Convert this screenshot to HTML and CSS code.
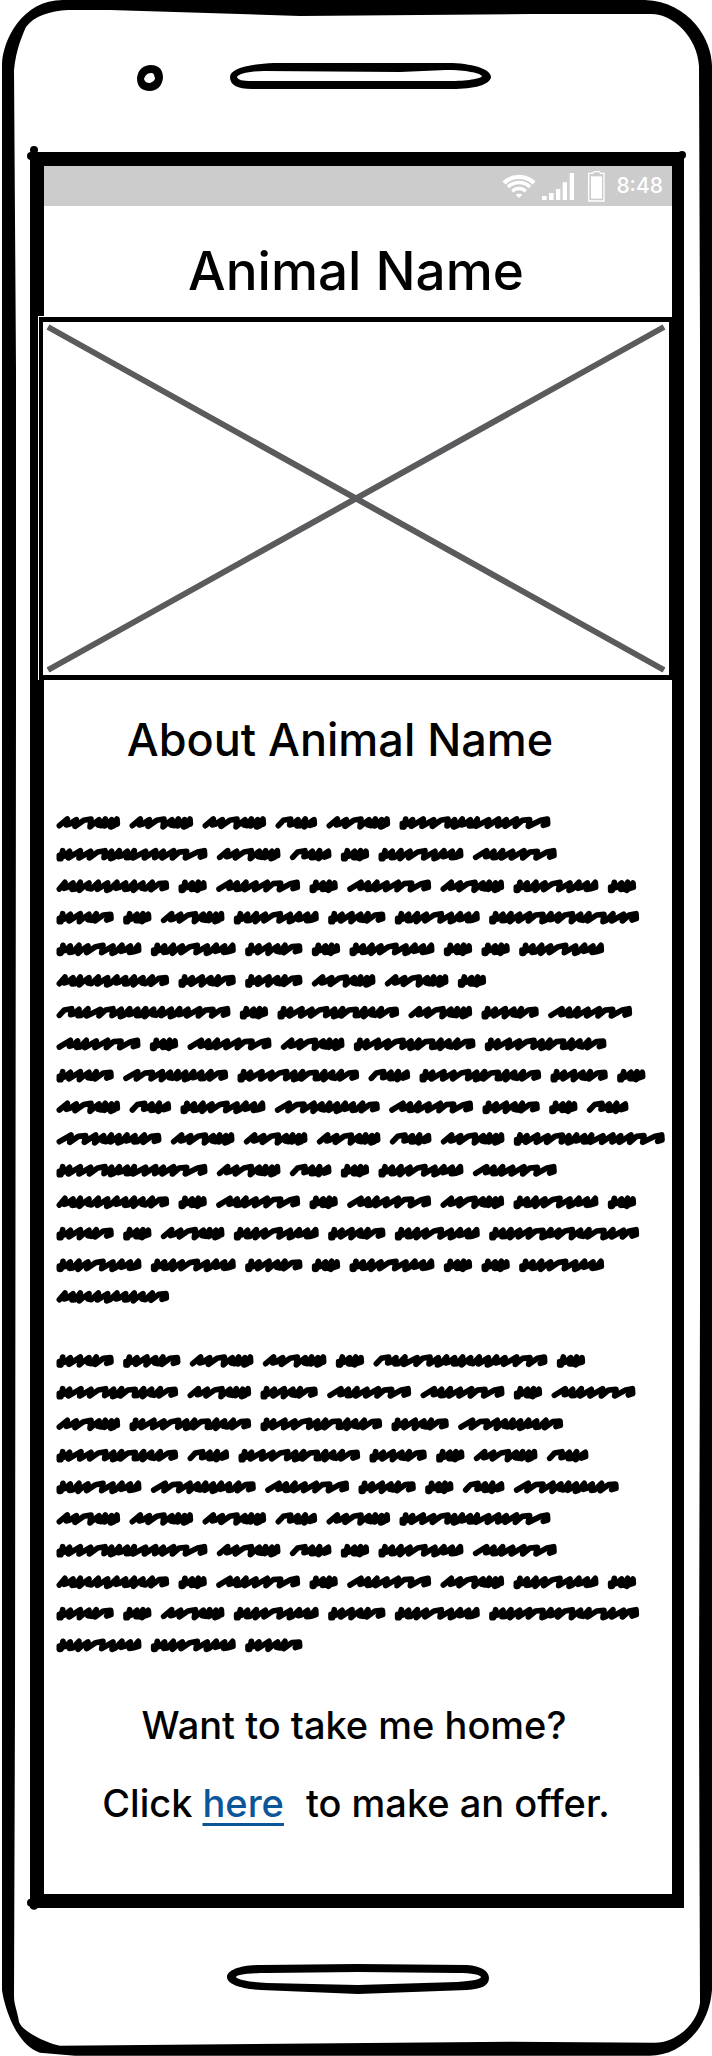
FILE: index.html
```html
<!DOCTYPE html>
<html lang="en">
<head>
<meta charset="utf-8">
<meta name="viewport" content="width=device-width, initial-scale=1">
<title>Animal Name</title>
<link rel="stylesheet" href="styles.css">
</head>
<body>
<div class="phone">
  <svg class="outline" viewBox="0 0 712 2056" preserveAspectRatio="none" aria-hidden="true">
    <path fill-rule="evenodd" d="M2 64C3 40 22 0 63 0H645C690 2 712 40 712 66V1990C709 2030 680 2056 650 2056H75L40 2053C14 2045 3 2000 2 1990Z M14 70C16 50 22 36 26 27C34 16 50 11 68 10L110 10L300 16L530 14H650C672 13 697 36 699 66L700 340V1300L699 1700L700 2003C698 2022 678 2043 655 2043L510 2042L60 2046C48 2044 22 2032 19 2022C17 2010 14 2005 14 1996L15 1700L16 700V370Z"/>
    <circle cx="31" cy="156" r="4"/><circle cx="34" cy="150" r="4"/>
    <circle cx="682" cy="155" r="4"/><circle cx="31" cy="1903" r="4"/><circle cx="34" cy="1906" r="4"/>
  </svg>

  <div class="bezel bezel-top">
    <svg class="camera" viewBox="0 0 26 26" aria-hidden="true"><path fill-rule="evenodd" d="M14 0C22 0 26 5 26 13C25 21 20 26 13 26C4 26 0 21 0 13C1 5 6 0 14 0Z M14 8C10 8 8 11 7 14C8 17 10 18 13 18C16 17 18 15 18 13C17 10 17 8 14 8Z"/></svg>
    <svg class="speaker" viewBox="0 0 262 28" preserveAspectRatio="none" aria-hidden="true"><path fill-rule="evenodd" d="M44 0H222C246 1 261 7 261 14C260 22 244 26 222 26H22C7 26 0 22 0 14C0 6 18 1 44 0Z M34 8C20 8 8 11 7 14C8 17 12 18 22 18H222C240 18 252 15 252 13C250 10 236 7 216 7L170 9Z"/></svg>
  </div>

  <div class="screen">
    <div class="status">
      <svg class="wifi" viewBox="66 60 102 96" fill="none" stroke="#fff" aria-label="Wi-Fi" role="img"><path stroke-width="13" d="M72 99A64 64 0 0 1 162 99"/><path stroke-width="11" d="M84 111A47 47 0 0 1 150 111"/><path stroke-width="10" d="M97 124A28 28 0 0 1 137 124"/><path fill="#fff" stroke="none" d="M107 134Q117 128 127 134L117 144Z"/></svg>
      <svg class="signal" viewBox="186 60 96 96" fill="#fff" aria-label="Signal" role="img"><path d="M186 138h14v12h-14zM207 129h14v21h-14zM228 117h13v33h-13zM248 97h13v53h-13zM269 69h13v81h-13z"/></svg>
      <svg class="battery" viewBox="324 60 51 96" aria-label="Battery" role="img"><path fill="none" stroke="#fff" stroke-width="4" stroke-linejoin="round" d="M326 70H338L342 65H358L362 70H372V153H326Z"/><path fill="#fff" d="M333 79h33v67h-33z"/></svg>
      <span class="time">8:48</span>
    </div>
    <h1 class="title">Animal Name</h1>
    <svg class="photo" viewBox="0 0 634 364" preserveAspectRatio="none" role="img" aria-label="Animal picture"><path fill="#fff" d="M0 0H634V364H0Z"/><path d="M1 1H634V364H1Z"/><path fill="#fff" d="M5 6H631V359H5Z"/><path fill="none" stroke="#5b5b5d" stroke-width="6" d="M10 11L626 354M10 354L626 11"/></svg>
    <h2 class="subtitle">About Animal Name</h2>
    <div class="story">
      <svg class="scribble" data-lines="AAABAC CABDEF GDFDFAED HDAEHEI EEHDEDDE GHHAAD JDKAHF FDFAKK HLKBKHD ABELFHDB LAAABAC CABDEF GDFDFAED HDAEHEI EEHDEDDE G" role="img" aria-label="Description"></svg>
      <svg class="scribble" data-lines="HHAADJD KAHFFDF AKKHL KBKHDAB ELFHDBL AAABAC CABDEF GDFDFAED HDAEHEI EEH" role="img" aria-label="Description, continued"></svg>
    </div>
    <p class="question">Want to take me home?</p>
    <p class="offer"><span>Click</span><a class="link" href="#offer">here</a><span>to make an offer.</span></p>
  </div>

  <div class="bezel bezel-bottom">
    <svg class="speaker" viewBox="0 0 262 30" preserveAspectRatio="none" aria-hidden="true"><path fill-rule="evenodd" d="M34 1L130 0L240 1C254 2 262 7 262 14C262 22 254 25 240 26L131 30L34 26C14 25 0 20 0 13C0 6 14 1 34 1Z M40 9C20 9 9 11 9 13C10 16 24 18 40 19L131 21L230 18C246 17 254 15 254 13C253 11 246 9 230 9L131 8Z"/></svg>
  </div>
</div>
<script src="scribble.js"></script>
</body>
</html>
```
FILE: styles.css
```css
* { box-sizing: border-box; }

body {
  margin: 0;
  background: #fff;
  color: #000;
  font-family: Inter, "Open Sans", sans-serif;
  font-weight: 500;
}

.phone {
  position: relative;
  padding: 0 28px 0 30px;
}

.outline {
  position: absolute;
  inset: 0;
  width: 100%;
  height: 100%;
  pointer-events: none;
}

.bezel { display: flex; }

.bezel-top {
  height: 152px;
  padding: 63px 0 0 107px;
  gap: 67px;
}

.bezel-bottom {
  height: 148px;
  padding: 56px 0 0 197px;
}

.camera {
  width: 26px;
  height: 26px;
  margin-top: 2px;
}

.speaker {
  flex: 0 1 262px;
  height: 28px;
}

.bezel-bottom .speaker { height: 30px; }

.screen {
  display: flex;
  flex-direction: column;
  border: 14px solid #000;
  border-right-width: 12px;
}

.status {
  display: flex;
  align-items: center;
  justify-content: flex-end;
  height: 40px;
  padding-right: 9px;
  background: #ccc;
  color: #fff;
}

.status svg { height: 32px; }
.wifi { width: 34px; margin-right: 6px; }
.signal { width: 32px; margin-right: 14px; }
.battery { width: 17px; margin-right: 11px; }
.time { font-size: 21px; line-height: 32px; }

.title {
  margin: 0;
  padding: 35px 4px 15px 0;
  font-size: 53px;
  line-height: 60px;
  font-weight: 500;
  text-align: center;
}

.photo {
  width: auto;
  height: 364px;
  margin-left: -6px;
}

.subtitle {
  margin: 0;
  padding: 32px 36px 48px 0;
  font-size: 45px;
  line-height: 56px;
  font-weight: 500;
  text-align: center;
}

.story {
  display: flex;
  flex-direction: column;
  gap: 32px;
  padding: 0 4px 0 12px;
}

.scribble {
  display: block;
  width: 100%;
  fill: none;
  stroke: #000;
  stroke-width: 17;
  stroke-linecap: round;
  stroke-linejoin: round;
}

.question,
.offer {
  margin: 0;
  font-size: 38px;
  line-height: 48px;
}

.question {
  padding: 31px 8px 0 0;
  text-align: center;
}

.offer {
  display: flex;
  justify-content: center;
  padding: 30px 4px 67px 0;
}

.link {
  margin: 0 22px 0 10px;
  color: #0b5699;
  text-decoration-thickness: 3px;
  text-underline-offset: 6px;
}
```
FILE: scribble.js
```js
// Each word: total width, starting height, and the x of every upstroke.
const WORDS = {
  A: [192, 30, [33, 60, 104, 128, 147, 166, 187]],
  B: [126, 30, [46, 68, 90, 118]],
  C: [454, 34, [19, 40, 72, 103, 146, 166, 189, 213, 234, 268, 298, 321, 352, 391, 446]],
  D: [86, 34, [20, 42, 60, 78]],
  E: [256, 34, [20, 42, 68, 95, 140, 170, 197, 222, 246]],
  F: [253, 30, [42, 64, 90, 120, 154, 194, 245]],
  G: [339, 30, [26, 50, 72, 98, 126, 154, 182, 208, 234, 260, 288, 330]],
  H: [173, 34, [19, 42, 72, 98, 120, 163]],
  I: [451, 34, [20, 42, 66, 92, 122, 162, 186, 210, 250, 275, 300, 345, 372, 404, 443]],
  J: [523, 30, [46, 68, 95, 132, 170, 195, 220, 244, 268, 292, 318, 345, 370, 395, 430, 470, 514]],
  K: [366, 34, [19, 40, 74, 104, 148, 172, 196, 237, 262, 286, 312, 357]],
  L: [316, 30, [44, 88, 118, 142, 165, 188, 212, 236, 264, 307]]
};
const GAP = 27;
const PITCH = 94.8;

function wordPath([width, startY, peaks], x, y) {
  let d = `M${x + 9} ${y + startY - 1}`;
  if (startY > 30) d += `L${x + 9} ${y + 23}L${x + 14} ${y + 33}`;
  peaks.forEach((p, i) => {
    const prev = i ? peaks[i - 1] : 8;
    if (p - prev > 37) d += `L${x + p - 22} ${y + 13}`;
    d += `L${x + Math.min(p, width - 10)} ${y + 9 + (i % 2) * 2}`;
    if (i === peaks.length - 1) {
      d += `L${x + width - 9} ${y + 24}L${x + width - 22} ${y + 28}`;
      return;
    }
    const gap = peaks[i + 1] - p;
    if (gap < 29) {
      d += `L${x + p - 3} ${y + 27 + (i % 3) * 3}L${x + p + 7} ${y + 24 + (i % 2) * 5}`;
    } else {
      d += `L${x + p - 4} ${y + 31}`;
    }
  });
  return d;
}

document.querySelectorAll(".scribble").forEach((svg) => {
  const lines = svg.dataset.lines.split(" ");
  svg.setAttribute("viewBox", `0 0 1836 ${Math.round(lines.length * PITCH)}`);
  lines.forEach((line, row) => {
    let x = 1;
    let d = "";
    for (const key of line) {
      d += wordPath(WORDS[key], x, Math.round(row * PITCH));
      x += WORDS[key][0] + GAP;
    }
    const path = document.createElementNS("http://www.w3.org/2000/svg", "path");
    path.setAttribute("d", d);
    svg.append(path);
  });
});
```
